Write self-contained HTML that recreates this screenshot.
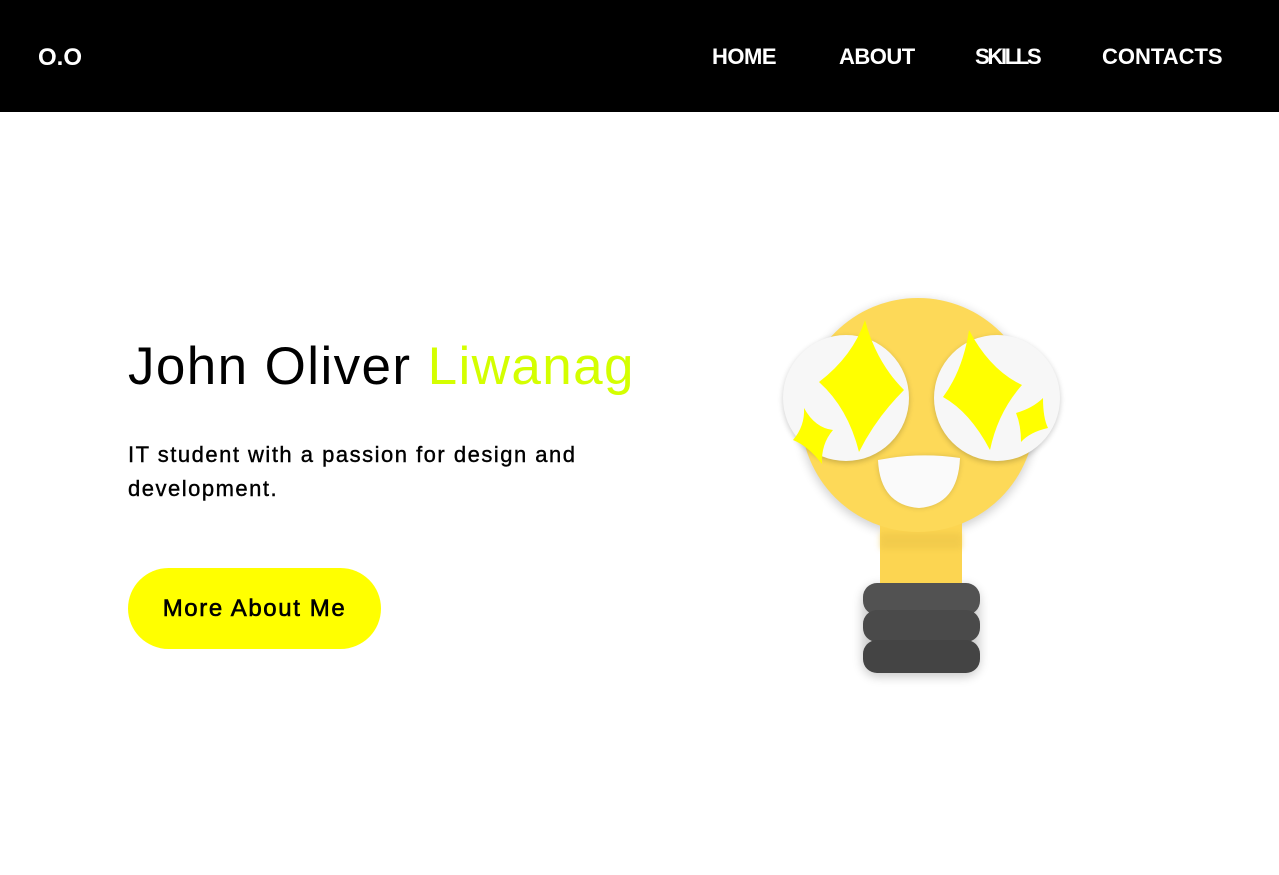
<!DOCTYPE html>
<html><head><style>
*{margin:0;padding:0;box-sizing:border-box}
body{width:1279px;height:875px;background:#fff;font-family:"Liberation Sans",sans-serif;position:relative;overflow:hidden}
nav{position:absolute;left:0;top:0;width:1279px;height:112px;background:#000;color:#fff;font-weight:bold}
.logo{position:absolute;left:38px;top:44px;font-size:24px}
.nav a{position:absolute;top:44px;font-size:22px;color:#fff;text-decoration:none;letter-spacing:-0.5px}
h1{position:absolute;left:128px;top:336px;font-size:53px;font-weight:normal;letter-spacing:1.4px;white-space:nowrap}
h1 span{color:#d4ff00}
p{position:absolute;left:128px;top:438px;font-size:22px;line-height:34px;width:520px;letter-spacing:1.5px;-webkit-text-stroke:0.4px #000}
.btn{position:absolute;left:128px;top:568px;width:253px;height:81px;border-radius:41px;background:#ffff00;font-size:24px;text-align:center;line-height:81px;letter-spacing:1.6px;-webkit-text-stroke:0.6px #000}
</style></head><body>
<nav><div class="logo">O.O</div>
<div class="nav"><a style="left:712px">HOME</a><a style="left:839px">ABOUT</a><a style="left:975px;letter-spacing:-2.3px">SKILLS</a><a style="left:1102px;letter-spacing:0">CONTACTS</a></div></nav>
<h1>John Oliver <span>Liwanag</span></h1>
<p>IT student with a passion for design and development.</p>
<div class="btn">More About Me</div>
<svg width="1279" height="875" style="position:absolute;left:0;top:0">
<defs><filter id="s" x="-30%" y="-30%" width="160%" height="160%"><feGaussianBlur stdDeviation="5"/></filter>
<filter id="t" x="-30%" y="-30%" width="160%" height="160%"><feGaussianBlur stdDeviation="3"/></filter></defs>
<circle cx="918" cy="418" r="118" fill="#000" opacity=".18" filter="url(#s)"/>
<rect x="862" y="585" width="118" height="92" rx="16" fill="#000" opacity=".2" filter="url(#s)"/>
<rect x="880" y="520" width="82" height="70" fill="#fcd551"/>
<rect x="880" y="533" width="82" height="16" fill="#e9c246" opacity=".5" filter="url(#t)"/>
<circle cx="918" cy="415" r="117" fill="#fdd958"/>
<rect x="863" y="583" width="117" height="32" rx="14" fill="#525252"/>
<rect x="863" y="610" width="117" height="32" rx="14" fill="#4a4a4a"/>
<rect x="863" y="640" width="117" height="33" rx="14" fill="#444"/>
<circle cx="846" cy="400" r="63" fill="#000" opacity=".2" filter="url(#t)"/>
<circle cx="997" cy="400" r="63" fill="#000" opacity=".2" filter="url(#t)"/>
<circle cx="846" cy="398" r="63" fill="#f7f7f7"/>
<circle cx="997" cy="398" r="63" fill="#f7f7f7"/>
<path d="M878 462 Q919 452 960 458 Q958 505 919 508 Q880 505 878 462Z" fill="#000" opacity=".15" filter="url(#t)"/>
<path d="M878 460 Q919 452 960 458 Q958 505 919 508 Q880 505 878 460Z" fill="#fafafa"/>
<path d="M865 320 Q876 362 904 390 Q876 418 859 452 Q848 408 819 382 Q853 356 865 320Z" fill="#ffff00"/>
<path d="M804 408 Q815 428 833 430 Q821 444 822 464 Q808 446 793 440 Q805 426 804 408Z" fill="#ffff00"/>
<path d="M969 330 Q990 370 1022 385 Q998 412 990 450 Q970 412 943 397 Q963 370 969 330Z" fill="#ffff00"/>
<path d="M1043 398 Q1043 418 1048 428 Q1030 432 1021 442 Q1021 425 1016 413 Q1033 408 1043 398Z" fill="#ffff00"/>
</svg>
</body></html>
